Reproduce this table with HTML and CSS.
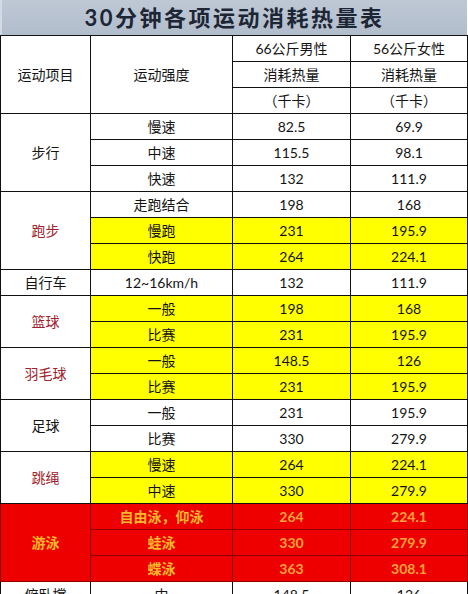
FILE: index.html
```html
<!DOCTYPE html>
<html lang="zh-CN">
<head>
<meta charset="utf-8">
<title>30分钟各项运动消耗热量表</title>
<link rel="stylesheet" href="styles.css">
</head>
<body>
<div class="sheet">
  <div class="title">30分钟各项运动消耗热量表</div>
  <table class="grid">
    <colgroup>
      <col class="c1"><col class="c2"><col class="c3"><col class="c4">
    </colgroup>
    <tbody>
      <tr><td rowspan="3">运动项目</td><td rowspan="3">运动强度</td><td>66公斤男性</td><td>56公斤女性</td></tr>
      <tr><td>消耗热量</td><td>消耗热量</td></tr>
      <tr><td>（千卡）</td><td>（千卡）</td></tr>

      <tr><td rowspan="3">步行</td><td>慢速</td><td class="num">82.5</td><td class="num">69.9</td></tr>
      <tr><td>中速</td><td class="num">115.5</td><td class="num">98.1</td></tr>
      <tr><td>快速</td><td class="num">132</td><td class="num">111.9</td></tr>

      <tr><td rowspan="3" class="name-red">跑步</td><td>走跑结合</td><td class="num">198</td><td class="num">168</td></tr>
      <tr class="yellow"><td>慢跑</td><td class="num">231</td><td class="num">195.9</td></tr>
      <tr class="yellow"><td>快跑</td><td class="num">264</td><td class="num">224.1</td></tr>

      <tr><td>自行车</td><td class="num">12~16km/h</td><td class="num">132</td><td class="num">111.9</td></tr>

      <tr class="yellow"><td rowspan="2" class="name-red white">篮球</td><td>一般</td><td class="num">198</td><td class="num">168</td></tr>
      <tr class="yellow"><td>比赛</td><td class="num">231</td><td class="num">195.9</td></tr>

      <tr class="yellow"><td rowspan="2" class="name-red white">羽毛球</td><td>一般</td><td class="num">148.5</td><td class="num">126</td></tr>
      <tr class="yellow"><td>比赛</td><td class="num">231</td><td class="num">195.9</td></tr>

      <tr><td rowspan="2">足球</td><td>一般</td><td class="num">231</td><td class="num">195.9</td></tr>
      <tr><td>比赛</td><td class="num">330</td><td class="num">279.9</td></tr>

      <tr class="yellow"><td rowspan="2" class="name-red white">跳绳</td><td>慢速</td><td class="num">264</td><td class="num">224.1</td></tr>
      <tr class="yellow"><td>中速</td><td class="num">330</td><td class="num">279.9</td></tr>

      <tr class="red"><td rowspan="3">游泳</td><td>自由泳，仰泳</td><td class="num">264</td><td class="num">224.1</td></tr>
      <tr class="red"><td>蛙泳</td><td class="num">330</td><td class="num">279.9</td></tr>
      <tr class="red"><td>蝶泳</td><td class="num">363</td><td class="num">308.1</td></tr>

      <tr><td>俯卧撑</td><td>中</td><td class="num">148.5</td><td class="num">126</td></tr>
    </tbody>
  </table>
</div>
</body>
</html>
```

FILE: styles.css
```css
html, body {
  margin: 0;
  padding: 0;
  background: #ffffff;
}

body {
  font-family: "Lato", "Noto Sans CJK SC", sans-serif;
  color: #141414;
  overflow: hidden;
}

.sheet {
  width: 467px;
}

.title {
  height: 35px;
  box-sizing: border-box;
  background: linear-gradient(#bec8d5, #b2bdcc);
  border-left: 2px solid #d3dae3;
  text-align: center;
  font-size: 22px;
  font-weight: 700;
  letter-spacing: 2.5px;
  line-height: 36px;
  color: #1d2635;
}

.grid {
  border-collapse: collapse;
  table-layout: fixed;
  width: 467px;
}

.c1 { width: 90px; }
.c2 { width: 142px; }
.c3 { width: 118px; }
.c4 { width: 117px; }

.grid td {
  border: 1px solid #111111;
  height: 25px;
  padding: 0;
  text-align: center;
  vertical-align: middle;
  font-size: 14px;
  line-height: 16px;
  white-space: nowrap;
  background: #ffffff;
}

.grid td.num {
  font-size: 14px;
}

.yellow td {
  background: #ffff00;
}

.grid td.white {
  background: #ffffff;
}

.grid td.name-red {
  color: #a0222c;
}

.red td {
  background: #ee0000;
  color: #ffb829;
  font-weight: 700;
  border-color: #8a0000;
}

.red td.num {
  color: #ffa33a;
}
```
